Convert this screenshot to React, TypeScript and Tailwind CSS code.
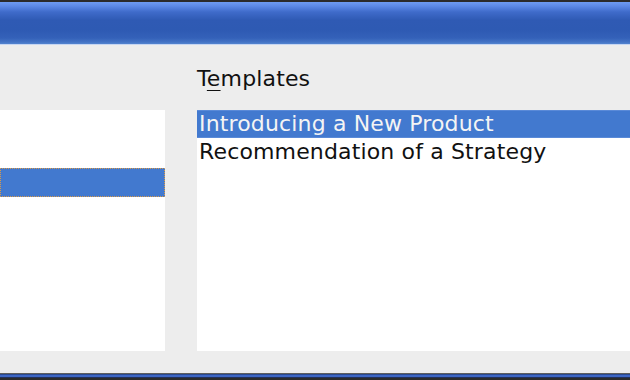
export default function App() {
  const templates = ["Introducing a New Product", "Recommendation of a Strategy"];
  const selected = 0;

  return (
    <div className="flex h-[380px] w-[630px] flex-col overflow-hidden bg-[#ededed] font-['DejaVu_Sans',sans-serif] text-[22px] tracking-[0.15px] text-[#111]">
      {/* window title bar */}
      <div className="h-[2px] shrink-0 bg-[#2b2b2b]" />
      <div className="h-[42px] shrink-0 bg-[linear-gradient(to_bottom,#6e9cf1_0px,#5d8ae6_4px,#3f6bca_10px,#2f5ab4_18px,#2e5ab3_28px,#3461b9_36px,#4373c5_40px,#5384d0_42px)]" />
      <div className="h-[1px] shrink-0 bg-[#c6d6f2]" />

      <div className="flex flex-1 pt-[21px]">
        <div className="flex w-[165px] shrink-0 flex-col">
          <div className="h-[44px]" />
          <div className="h-[241px] bg-white pt-[58px]">
            <div className="h-[29px] border border-dotted border-[#d89a4a] bg-[#4279cf]" />
          </div>
        </div>

        <div className="ml-[32px] flex w-[470px] shrink-0 flex-col">
          <div className="h-[26px] leading-[26px]">
            T<span className="underline decoration-1 underline-offset-[4px]">e</span>mplates
          </div>
          <div className="h-[18px]" />
          <div className="h-[241px] bg-white">
            {templates.map((t, i) => (
              <div
                key={t}
                className={
                  i === selected
                    ? "h-[28px] border-y border-[#5a8ad8] bg-[#4279cf] pl-[2px] leading-[26px] text-[#f4f4f4]"
                    : "h-[28px] pl-[2px] leading-[28px]"
                }
              >
                {t}
              </div>
            ))}
          </div>
        </div>
      </div>

      {/* bottom window border */}
      <div className="h-[1px] shrink-0 bg-[#5e5e5e]" />
      <div className="h-[1px] shrink-0 bg-[#2c4a92]" />
      <div className="h-[2px] shrink-0 bg-[#3d66c4]" />
      <div className="h-[1px] shrink-0 bg-[#233159]" />
      <div className="h-[2px] shrink-0 bg-[#2b2b2b]" />
    </div>
  );
}
